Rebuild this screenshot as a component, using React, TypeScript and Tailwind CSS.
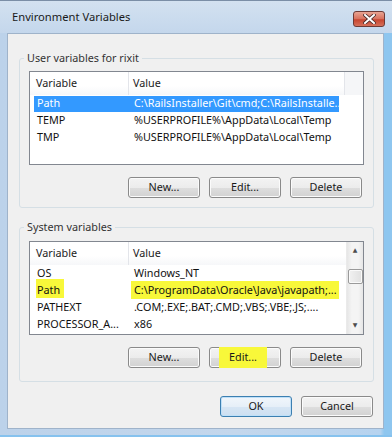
import React from "react";

const FONT = "font-['Noto_Sans','DejaVu_Sans',sans-serif]";

interface Row {
  name: string;
  value: string;
  selected?: boolean;
  mark?: boolean;
}

const userRows: Row[] = [
  { name: "Path", value: "C:\\RailsInstaller\\Git\\cmd;C:\\RailsInstalle...", selected: true },
  { name: "TEMP", value: "%USERPROFILE%\\AppData\\Local\\Temp" },
  { name: "TMP", value: "%USERPROFILE%\\AppData\\Local\\Temp" },
];

const systemRows: Row[] = [
  { name: "OS", value: "Windows_NT" },
  { name: "Path", value: "C:\\ProgramData\\Oracle\\Java\\javapath;...", mark: true },
  { name: "PATHEXT", value: ".COM;.EXE;.BAT;.CMD;.VBS;.VBE;.JS;...." },
  { name: "PROCESSOR_A...", value: "x86" },
];

const Button = ({
  label,
  isDefault,
  mark,
}: {
  label: string;
  isDefault?: boolean;
  mark?: boolean;
}) => (
  <button
    className={
      isDefault
        ? "w-[72px] h-[21px] rounded-[3px] border border-[#3c7fb1] bg-[linear-gradient(to_bottom,#f1f6fb_0%,#e6eff8_50%,#d7e6f4_50%,#cddff1_100%)] shadow-[inset_0_0_0_1px_#bfe0f8] text-[10.8px] text-[#1a1a1a] flex items-center justify-center"
        : "w-[72px] h-[21px] rounded-[3px] border border-[#8a8a8a] bg-[linear-gradient(to_bottom,#f3f3f3_0%,#ececec_50%,#dedede_50%,#d2d2d2_100%)] shadow-[inset_0_0_0_1px_#fbfbfb] text-[10.8px] text-[#1a1a1a] flex items-center justify-center"
    }
  >
    {mark ? (
      <span className="bg-[#f8f83a] px-[10px] py-[2px] -ml-[4px]">{label}</span>
    ) : (
      label
    )}
  </button>
);

const Header = ({ scroll }: { scroll?: boolean }) => (
  <div className="flex h-[23px] shrink-0 items-center bg-[linear-gradient(to_bottom,#ffffff_0%,#ffffff_60%,#f6f7f9_100%)] text-[10.8px] text-[#222]">
    <div className="w-[99px] shrink-0 h-full flex items-center pl-[6px] border-r border-[#e3e5ea]">Variable</div>
    <div
      className={
        scroll
          ? "flex-1 h-full flex items-center pl-[4px]"
          : "w-[216px] shrink-0 h-full flex items-center pl-[4px] border-r border-[#e3e5ea]"
      }
    >
      Value
    </div>
    {!scroll && <div className="flex-1 h-full bg-[#f5f6f8]" />}
  </div>
);

const ListRow = ({ row }: { row: Row }) => (
  <div className="flex h-[17px] shrink-0 items-center text-[10.8px] text-[#111] whitespace-nowrap pl-[4px]">
    <div
      className={
        row.selected
          ? "flex items-center h-[16px] w-[305px] bg-[#3399ff] text-white"
          : "flex items-center h-[16px]"
      }
    >
      <div className="w-[96px] shrink-0 pl-[3px]">
        {row.mark ? (
          <span className="bg-[#f8f83a] pl-[1px] pr-[4px] pt-[3px] pb-[1px] -ml-[1px]">{row.name}</span>
        ) : (
          row.name
        )}
      </div>
      <div className="pl-[4px] shrink-0">
        {row.mark ? (
          <span className="bg-[#f8f83a] pl-[3px] pr-[2px] pt-[1px] pb-[2px] -ml-[3px]">{row.value}</span>
        ) : (
          row.value
        )}
      </div>
    </div>
  </div>
);

const ScrollBar = () => (
  <div className="w-[17px] shrink-0 h-full flex flex-col items-center bg-[linear-gradient(to_right,#e6e6e6,#f4f4f4_30%,#f4f4f4_70%,#e6e6e6)] border-l border-[#eaeaea]">
    <div className="h-[17px] flex items-center justify-center text-[6px] text-[#4d4d4d]">▲</div>
    <div className="mt-[10px] w-[15px] h-[15px] rounded-[2px] border border-[#9a9a9a] bg-[linear-gradient(to_right,#f1f1f1,#e0e0e0)] shadow-[inset_0_0_0_1px_#fafafa]" />
    <div className="flex-1" />
    <div className="h-[17px] flex items-center justify-center text-[6px] text-[#4d4d4d]">▼</div>
  </div>
);

const GroupBox = ({
  title,
  children,
  className,
}: {
  title: string;
  children: React.ReactNode;
  className?: string;
}) => (
  <fieldset className={"border border-[#d5dfe5] rounded-[3px] px-[9px] " + (className ?? "")}>
    <legend className="-ml-[5px] px-[3px] text-[10.8px] text-[#333] leading-[16px]">{title}</legend>
    {children}
  </fieldset>
);

export default function App() {
  return (
    <div
      className={
        FONT +
        " w-[392px] h-[437px] flex flex-col border-t border-[#7b8ea6] bg-[linear-gradient(to_right,#bcd2ea_0%,#c4d7ec_60%,#b6d3ef_97%,#8ec6ef_98%)]"
      }
    >
      {/* title bar */}
      <div className="h-[32px] flex items-start justify-between pl-[12px] pr-[7px] bg-[linear-gradient(to_bottom,#d3e1f0,#c4d7ec)]">
        <span className="mt-[8px] text-[11.2px] text-[#1a1a1a]">Environment Variables</span>
        <div className="mt-[10px] w-[32px] h-[16px] rounded-[3px] border border-[#6d3a35] bg-[linear-gradient(to_bottom,#e8a493_0%,#d8705c_50%,#c7452f_55%,#d5705a_100%)] flex items-center justify-center">
          <svg width="13" height="10" viewBox="0 0 13 10">
            <path d="M2 1 L11 9 M11 1 L2 9" stroke="#4a2a28" strokeWidth="3.6" strokeLinecap="square" />
            <path d="M2 1 L11 9 M11 1 L2 9" stroke="#ffffff" strokeWidth="2" strokeLinecap="square" />
          </svg>
        </div>
      </div>

      {/* client area */}
      <div className="ml-[7px] mr-[8px] h-[396px] border border-[#9fb3ca] bg-[#f0f0f0] pt-[16px] pl-[11px] pr-[9px]">
        <GroupBox title="User variables for rixit" className="pt-[5px] pb-[9px]">
          <div className="h-[94px] border border-[#828790] bg-white flex flex-col overflow-hidden">
            <Header />
            {userRows.map((r) => (
              <ListRow key={r.name} row={r} />
            ))}
          </div>
          <div className="mt-[12px] flex justify-end gap-[9px] pr-[2px]">
            <Button label="New..." />
            <Button label="Edit..." />
            <Button label="Delete" />
          </div>
        </GroupBox>

        <GroupBox title="System variables" className="mt-[11px] pt-[6px] pb-[13px]">
          <div className="h-[94px] border border-[#828790] bg-white flex overflow-hidden">
            <div className="flex-1 flex flex-col">
              <Header scroll />
              {systemRows.map((r) => (
                <ListRow key={r.name} row={r} />
              ))}
            </div>
            <ScrollBar />
          </div>
          <div className="mt-[12px] flex justify-end gap-[9px] pr-[2px]">
            <Button label="New..." />
            <Button label="Edit..." mark />
            <Button label="Delete" />
          </div>
        </GroupBox>

        <div className="mt-[14px] flex justify-end gap-[9px] pr-[1px]">
          <Button label="OK" isDefault />
          <Button label="Cancel" />
        </div>
      </div>

      {/* bottom frame */}
      <div className="flex-1 border-b-[2px] border-[#86c2ee]" />
    </div>
  );
}
